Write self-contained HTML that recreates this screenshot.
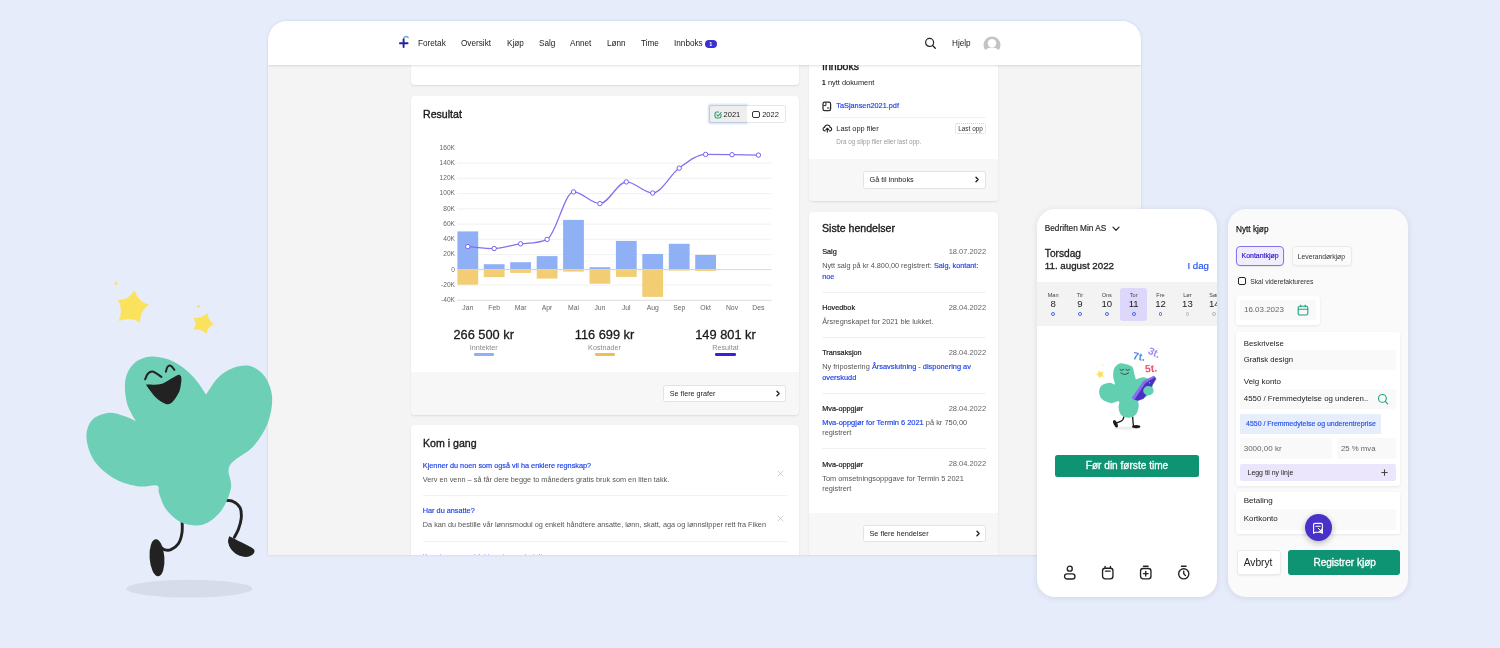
<!DOCTYPE html>
<html><head><meta charset="utf-8">
<style>
*{box-sizing:border-box;margin:0;padding:0}
html,body{width:1500px;height:648px;overflow:hidden}
body{background:#e6ecfa;font-family:"Liberation Sans",sans-serif;color:#1a1a1a;position:relative}
.abs{position:absolute}
.t{position:absolute;white-space:nowrap;line-height:1}
#win,.phone{will-change:transform}
/* main window */
#win{position:absolute;left:268px;top:20px;width:873px;height:535px;background:#f4f4f4;overflow:hidden;clip-path:inset(1px 0 0 0 round 19px 19px 0 0)}
#winsh{position:absolute;left:268px;top:21px;width:873px;height:534px;border-radius:19px 19px 0 0;box-shadow:0 0 3px rgba(120,140,190,.28)}
#nav{position:absolute;left:0;top:0;width:873px;height:45px;background:#fff;box-shadow:0 1px 2px rgba(0,0,0,.12);z-index:5}
.nv{position:absolute;top:20.3px;font-size:8.2px;color:#222;white-space:nowrap;line-height:1}
.pc{position:absolute;left:-268px;top:-20px;width:1500px;height:648px}
.card{position:absolute;background:#fff;border-radius:4px;box-shadow:0 1px 2px rgba(0,0,0,.10)}
.foot{position:absolute;left:0;right:0;bottom:0;background:#f7f7f7;border-radius:0 0 4px 4px}
.btn{position:absolute;background:#fff;border:1px solid #e3e3e3;border-radius:2.5px;font-size:7.2px;color:#222}
.h{position:absolute;font-size:10.6px;color:#1a1a1a;white-space:nowrap;line-height:1;-webkit-text-stroke:.35px #1a1a1a}
.blue{color:#1f4be0}
.gray{color:#555}
/* phones */
.phone{position:absolute;top:209px;height:387.8px;border-radius:18px;box-shadow:0 1px 6px rgba(60,70,100,.13);overflow:hidden}
.yl{position:absolute;margin-top:.8px;left:425px;width:30px;text-align:right;font-size:6.6px;color:#666;line-height:1;white-space:nowrap}
.ml{position:absolute;top:305.2px;width:30px;text-align:center;font-size:6.8px;color:#666;line-height:1;white-space:nowrap}
.tot{position:absolute;top:232.6px;width:62px;text-align:center;font-size:12.8px;color:#1a1a1a;line-height:1;white-space:nowrap;-webkit-text-stroke:.3px #1a1a1a}
.totl{position:absolute;top:247.9px;width:62px;text-align:center;font-size:7.2px;color:#8a8a8a;line-height:1;white-space:nowrap}
</style></head><body>

<div id="winsh"></div>
<div id="win">
  <div id="nav">
    <svg class="abs" style="left:130px;top:15px" width="12" height="14" viewBox="0 0 12 14"><path d="M5.5 5C5.5 2.6 7 1.4 8.6 1.6C9.2 1.7 9.7 2 10.1 2.5" fill="none" stroke="#6ea7e2" stroke-width="1.5" stroke-linecap="round"/><path d="M1.9 8.3H9.6M5.6 12.1V4.4" fill="none" stroke="#2a1f96" stroke-width="1.9" stroke-linecap="round"/></svg>
    <span class="nv" style="left:150px">Foretak</span>
    <span class="nv" style="left:193px">Oversikt</span>
    <span class="nv" style="left:239px">Kjøp</span>
    <span class="nv" style="left:271px">Salg</span>
    <span class="nv" style="left:302px">Annet</span>
    <span class="nv" style="left:339px">Lønn</span>
    <span class="nv" style="left:373px">Time</span>
    <span class="nv" style="left:406px">Innboks</span>
    <div class="abs" style="left:437px;top:19.5px;width:11.5px;height:8.5px;border-radius:5px;background:#3a2fd0;color:#fff;font-size:5.5px;font-weight:bold;text-align:center;line-height:8.5px">1</div>
    <svg class="abs" style="left:656px;top:17px" width="13" height="13" viewBox="0 0 13 13"><circle cx="5.6" cy="5.4" r="4" fill="none" stroke="#222" stroke-width="1.2"/><path d="M8.6 8.5L11.3 11.3" stroke="#222" stroke-width="1.3" stroke-linecap="round"/></svg>
    <span class="nv" style="left:684px">Hjelp</span>
    <svg class="abs" style="left:715px;top:16px;overflow:visible" width="18" height="18" viewBox="0 0 18 18"><defs><clipPath id="av"><circle cx="9" cy="9" r="8.5"/></clipPath></defs><circle cx="9" cy="9" r="8.5" fill="#c4c4c4"/><g clip-path="url(#av)" fill="#fff"><circle cx="9" cy="7.2" r="4.2"/></g><ellipse cx="9" cy="19.5" rx="9.6" ry="7.9" fill="#fff"/></svg>
  </div>

  <!-- left column -->
  <div class="card" style="left:143px;top:30px;width:388px;height:34.5px"></div>

  <div class="card" id="resultat" style="left:143px;top:76px;width:388px;height:319px">
    <span class="h" style="left:12px;top:12.5px">Resultat</span>
    <div class="foot" style="height:43px"></div>
    <!-- year toggle -->
    <div class="abs" style="left:297.6px;top:9.4px;width:39px;height:17.4px;background:#eee;border:1px solid #bfcbdc;border-radius:2px;box-shadow:0 0 0 1.5px rgba(170,195,235,.35)"></div>
    <div class="abs" style="left:336.4px;top:9.4px;width:38.4px;height:17.4px;background:#fff;border:1px solid #e6e6e6;border-left:none;border-radius:0 2px 2px 0"></div>
    <svg class="abs" style="left:302.5px;top:14.5px" width="8" height="8" viewBox="0 0 8 8"><path d="M7 3.6V5.2C7 6.2 6.2 7 5.2 7H2.8C1.8 7 1 6.2 1 5.2V2.8C1 1.8 1.8 1 2.8 1H4.6" fill="none" stroke="#2a9d6a" stroke-width="1.1" stroke-linecap="round"/><path d="M2.9 3.8L4.1 5L7.1 1.6" fill="none" stroke="#2a9d6a" stroke-width="1.1" stroke-linecap="round" stroke-linejoin="round"/></svg>
    <span class="t" style="left:312.6px;top:14.6px;font-size:7.5px;color:#222">2021</span>
    <div class="abs" style="left:341.4px;top:14.7px;width:7.2px;height:7.2px;border:1.25px solid #333;border-radius:2px"></div>
    <span class="t" style="left:351.2px;top:14.6px;font-size:7.5px;color:#222">2022</span>
    <!-- chart -->
    <svg class="abs" style="left:-411px;top:-96px" width="1500" height="648" viewBox="0 0 1500 648">
<line x1="457" x2="771.5" y1="163.1" y2="163.1" stroke="#ececec" stroke-width="0.8"/>
<line x1="457" x2="771.5" y1="178.3" y2="178.3" stroke="#ececec" stroke-width="0.8"/>
<line x1="457" x2="771.5" y1="193.6" y2="193.6" stroke="#ececec" stroke-width="0.8"/>
<line x1="457" x2="771.5" y1="208.8" y2="208.8" stroke="#ececec" stroke-width="0.8"/>
<line x1="457" x2="771.5" y1="224.1" y2="224.1" stroke="#ececec" stroke-width="0.8"/>
<line x1="457" x2="771.5" y1="239.3" y2="239.3" stroke="#ececec" stroke-width="0.8"/>
<line x1="457" x2="771.5" y1="254.6" y2="254.6" stroke="#ececec" stroke-width="0.8"/>
<line x1="457" x2="771.5" y1="269.8" y2="269.8" stroke="#ececec" stroke-width="0.8"/>
<line x1="457" x2="771.5" y1="285.1" y2="285.1" stroke="#ececec" stroke-width="0.8"/>
<line x1="457" x2="771.5" y1="300.3" y2="300.3" stroke="#ececec" stroke-width="0.8"/>
<line x1="457" x2="771.5" y1="300.3" y2="300.3" stroke="#dcdcdc" stroke-width="0.8"/>
<rect x="457.4" y="231.4" width="20.8" height="38.1" fill="#8fb0f5"/>
<rect x="457.4" y="269.5" width="20.8" height="15.2" fill="#f3cd73"/>
<rect x="483.8" y="264.2" width="20.8" height="5.3" fill="#8fb0f5"/>
<rect x="483.8" y="269.5" width="20.8" height="7.6" fill="#f3cd73"/>
<rect x="510.2" y="262.2" width="20.8" height="7.3" fill="#8fb0f5"/>
<rect x="510.2" y="269.5" width="20.8" height="3.4" fill="#f3cd73"/>
<rect x="536.7" y="256.1" width="20.8" height="13.4" fill="#8fb0f5"/>
<rect x="536.7" y="269.5" width="20.8" height="9.1" fill="#f3cd73"/>
<rect x="563.1" y="219.9" width="20.8" height="49.6" fill="#8fb0f5"/>
<rect x="563.1" y="269.5" width="20.8" height="2.1" fill="#f3cd73"/>
<rect x="589.5" y="267.2" width="20.8" height="2.3" fill="#8fb0f5"/>
<rect x="589.5" y="269.5" width="20.8" height="14.2" fill="#f3cd73"/>
<rect x="615.9" y="240.9" width="20.8" height="28.6" fill="#8fb0f5"/>
<rect x="615.9" y="269.5" width="20.8" height="7.4" fill="#f3cd73"/>
<rect x="642.3" y="254.0" width="20.8" height="15.5" fill="#8fb0f5"/>
<rect x="642.3" y="269.5" width="20.8" height="27.4" fill="#f3cd73"/>
<rect x="668.8" y="243.8" width="20.8" height="25.7" fill="#8fb0f5"/>
<rect x="668.8" y="269.5" width="20.8" height="1.1" fill="#f3cd73"/>
<rect x="695.2" y="254.9" width="20.8" height="14.6" fill="#8fb0f5"/>
<rect x="695.2" y="269.5" width="20.8" height="1.5" fill="#f3cd73"/>
<line x1="457" x2="720" y1="269.5" y2="269.5" stroke="#d4d4d4" stroke-width="1.2"/>
<line x1="720" x2="771.5" y1="269.5" y2="269.5" stroke="#f3dca6" stroke-width="1"/>
<path d="M467.8 246.6 C476.6 247.3 485.4 248.5 494.2 248.5 C503.0 248.5 511.8 244.6 520.6 243.8 C529.4 243.0 538.3 243.7 547.1 239.4 C555.9 235.0 564.7 191.9 573.5 191.9 C582.3 191.9 591.1 203.6 599.9 203.6 C608.7 203.6 617.5 181.9 626.3 181.9 C635.1 181.9 643.9 193.0 652.7 193.0 C661.5 193.0 670.4 174.5 679.2 168.1 C688.0 161.6 696.8 154.4 705.6 154.4 C714.4 154.4 723.2 154.5 732.0 154.7 C740.8 154.8 749.6 155.0 758.4 155.1" fill="none" stroke="#8570f0" stroke-width="1.25"/>
<circle cx="467.8" cy="246.6" r="2.2" fill="#fff" stroke="#7a62ee" stroke-width="1"/>
<circle cx="494.2" cy="248.5" r="2.2" fill="#fff" stroke="#7a62ee" stroke-width="1"/>
<circle cx="520.6" cy="243.8" r="2.2" fill="#fff" stroke="#7a62ee" stroke-width="1"/>
<circle cx="547.1" cy="239.4" r="2.2" fill="#fff" stroke="#7a62ee" stroke-width="1"/>
<circle cx="573.5" cy="191.9" r="2.2" fill="#fff" stroke="#7a62ee" stroke-width="1"/>
<circle cx="599.9" cy="203.6" r="2.2" fill="#fff" stroke="#7a62ee" stroke-width="1"/>
<circle cx="626.3" cy="181.9" r="2.2" fill="#fff" stroke="#7a62ee" stroke-width="1"/>
<circle cx="652.7" cy="193.0" r="2.2" fill="#fff" stroke="#7a62ee" stroke-width="1"/>
<circle cx="679.2" cy="168.1" r="2.2" fill="#fff" stroke="#7a62ee" stroke-width="1"/>
<circle cx="705.6" cy="154.4" r="2.2" fill="#fff" stroke="#7a62ee" stroke-width="1"/>
<circle cx="732.0" cy="154.7" r="2.2" fill="#fff" stroke="#7a62ee" stroke-width="1"/>
<circle cx="758.4" cy="155.1" r="2.2" fill="#fff" stroke="#7a62ee" stroke-width="1"/>
    </svg>
    <div class="abs" style="left:-411px;top:-96px;width:0;height:0">
<span class="yl" style="top:143.9px">160K</span>
<span class="yl" style="top:159.2px">140K</span>
<span class="yl" style="top:174.4px">120K</span>
<span class="yl" style="top:189.7px">100K</span>
<span class="yl" style="top:204.9px">80K</span>
<span class="yl" style="top:220.2px">60K</span>
<span class="yl" style="top:235.4px">40K</span>
<span class="yl" style="top:250.7px">20K</span>
<span class="yl" style="top:265.9px">0</span>
<span class="yl" style="top:281.1px">-20K</span>
<span class="yl" style="top:296.4px">-40K</span>
<span class="ml" style="left:452.8px">Jan</span>
<span class="ml" style="left:479.2px">Feb</span>
<span class="ml" style="left:505.6px">Mar</span>
<span class="ml" style="left:532.1px">Apr</span>
<span class="ml" style="left:558.5px">Mai</span>
<span class="ml" style="left:584.9px">Jun</span>
<span class="ml" style="left:611.3px">Jul</span>
<span class="ml" style="left:637.7px">Aug</span>
<span class="ml" style="left:664.2px">Sep</span>
<span class="ml" style="left:690.6px">Okt</span>
<span class="ml" style="left:717.0px">Nov</span>
<span class="ml" style="left:743.4px">Des</span>
    </div>
    <!-- totals -->
    <span class="tot" style="left:41.7px">266 500 kr</span>
    <span class="tot" style="left:162.5px">116 699 kr</span>
    <span class="tot" style="left:283.5px">149 801 kr</span>
    <span class="totl" style="left:41.7px">Inntekter</span>
    <span class="totl" style="left:162.5px">Kostnader</span>
    <span class="totl" style="left:283.5px">Resultat</span>
    <div class="abs" style="left:62.5px;top:257.4px;width:20.5px;height:2.4px;border-radius:1.2px;background:#8fb0f5"></div>
    <div class="abs" style="left:183.5px;top:257.4px;width:20.5px;height:2.4px;border-radius:1.2px;background:#f0c04f"></div>
    <div class="abs" style="left:304.4px;top:257.4px;width:20.5px;height:2.4px;border-radius:1.2px;background:#3a1fe0"></div>
    <div class="btn" style="left:251.8px;top:288.9px;width:123.7px;height:17.3px"><span class="t" style="left:6px;top:4.6px">Se flere grafer</span><svg class="abs" style="right:4.2px;top:4.6px" width="6" height="7" viewBox="0 0 6 7"><path d="M2 1.3L4.1 3.5L2 5.7" fill="none" stroke="#222" stroke-width="1.4" stroke-linecap="round" stroke-linejoin="round"/></svg></div>
  </div>

  <div class="card" id="kom" style="left:143px;top:405px;width:388px;height:160px">
    <span class="h" style="left:12px;top:12.5px">Kom i gang</span>
  </div>

  <!-- right column -->
  <div class="card" id="innboks" style="left:541px;top:30px;width:189px;height:151px">
    <span class="h" style="left:13px;top:10.7px">Innboks</span>
    <div class="foot" style="height:42.3px"></div>
  </div>
  <div class="card" id="siste" style="left:541px;top:191.7px;width:189px;height:343.3px;border-radius:4px 4px 0 0">
    <span class="h" style="left:13px;top:11.8px">Siste hendelser</span>
    <div class="foot" style="height:42px;border-radius:0"></div>
  </div>
  <div class="pc">
<!--CARDS-START-->
<!-- kom i gang -->
<span class="t" style="left:422.8px;top:461.9px;font-size:7.3px;color:#1c41ec;-webkit-text-stroke:.15px #1c41ec">Kjenner du noen som også vil ha enklere regnskap?</span>
<span class="t" style="left:422.8px;top:475.8px;font-size:7.33px;color:#555;">Verv en venn – så får dere begge to måneders gratis bruk som en liten takk.</span>
<div class="abs" style="left:423px;top:495.3px;width:364px;height:1px;background:#f1f1f1"></div>
<span class="t" style="left:422.8px;top:507.2px;font-size:7.3px;color:#1c41ec;-webkit-text-stroke:.15px #1c41ec">Har du ansatte?</span>
<span class="t" style="left:422.8px;top:521.1px;font-size:7.3px;color:#555;">Da kan du bestille vår lønnsmodul og enkelt håndtere ansatte, lønn, skatt, aga og lønnslipper rett fra Fiken</span>
<div class="abs" style="left:423px;top:540.6px;width:364px;height:1px;background:#f1f1f1"></div>
<span class="t" style="left:422.8px;top:553.0px;font-size:7.3px;color:#7f96ee;">Kom i gang med fakturering og betaling</span>
<svg class="abs" style="left:777.2px;top:469.5px" width="7" height="7" viewBox="0 0 7 7"><path d="M1 1L6 6M6 1L1 6" stroke="#c4c4c4" stroke-width=".8" stroke-linecap="round"/></svg>
<svg class="abs" style="left:777.2px;top:514.8px" width="7" height="7" viewBox="0 0 7 7"><path d="M1 1L6 6M6 1L1 6" stroke="#c4c4c4" stroke-width=".8" stroke-linecap="round"/></svg>
<!-- innboks -->
<span class="t" style="left:821.8px;top:79.1px;font-size:7.4px;color:#222;"><b>1</b> nytt dokument</span>
<svg class="abs" style="left:822px;top:100.8px" width="10" height="11" viewBox="0 0 10 11"><rect x="1" y="1.2" width="7.6" height="8.4" rx="1.7" fill="none" stroke="#2a2a2a" stroke-width="1.25"/><path d="M1.4 4.6H3.9V1.6" fill="none" stroke="#2a2a2a" stroke-width="1" stroke-linejoin="round"/><path d="M5.4 7H7" stroke="#2a2a2a" stroke-width="1" stroke-linecap="round"/></svg>
<span class="t" style="left:836.3px;top:101.5px;font-size:7.32px;color:#1c41ec;-webkit-text-stroke:.15px #1c41ec">TaSjansen2021.pdf</span>
<div class="abs" style="left:822px;top:116.6px;width:164px;height:1px;background:#f1f1f1"></div>
<svg class="abs" style="left:821.6px;top:123.6px" width="11" height="9" viewBox="0 0 11 9" ><g transform="translate(.3 .2) scale(.92)"><path d="M3.2 7.2H2.8C1.6 7.2 .8 6.3 .8 5.3C.8 4.3 1.5 3.6 2.5 3.5C2.7 2 3.9 .9 5.5 .9C7.1 .9 8.3 2 8.5 3.4C9.5 3.5 10.2 4.3 10.2 5.3C10.2 6.3 9.4 7.2 8.3 7.2H7.8" fill="none" stroke="#222" stroke-width="1.2" stroke-linecap="round"/><path d="M5.5 8.6V4.8M4 6L5.5 4.4L7 6" fill="none" stroke="#222" stroke-width="1.2" stroke-linecap="round" stroke-linejoin="round"/></g></svg>
<span class="t" style="left:836.3px;top:124.8px;font-size:7.42px;color:#222;">Last opp filer</span>
<div class="abs" style="left:955.3px;top:123.3px;width:30.5px;height:11.2px;border:1px dotted #cfcfcf;border-radius:2px;background:#fff"></div>
<span class="t" style="left:958.2px;top:125.6px;font-size:6.44px;color:#333;">Last opp</span>
<span class="t" style="left:836.3px;top:139.3px;font-size:6.32px;color:#9a9a9a;">Dra og slipp filer eller last opp.</span>
<div class="btn" style="left:862.5px;top:171.4px;width:123.3px;height:17.2px"><span class="t" style="left:6px;top:3.7px;font-size:7.3px;color:#222">Gå til innboks</span><svg class="abs" style="right:4.6px;top:4.1px" width="6" height="7" viewBox="0 0 6 7"><path d="M2 1.3L4.1 3.5L2 5.7" fill="none" stroke="#222" stroke-width="1.4" stroke-linecap="round" stroke-linejoin="round"/></svg></div>
<!-- siste -->
<span class="t" style="left:822.2px;top:248.3px;font-size:7.3px;color:#222;-webkit-text-stroke:.2px #222">Salg</span>
<span class="t" style="right:513.9px;top:248.2px;font-size:7.49px;color:#666;">18.07.2022</span>
<span class="t" style="left:822.2px;top:304.1px;font-size:7.3px;color:#222;-webkit-text-stroke:.2px #222">Hovedbok</span>
<span class="t" style="right:513.9px;top:304.0px;font-size:7.49px;color:#666;">28.04.2022</span>
<span class="t" style="left:822.2px;top:349.1px;font-size:7.3px;color:#222;-webkit-text-stroke:.2px #222">Transaksjon</span>
<span class="t" style="right:513.9px;top:349.0px;font-size:7.49px;color:#666;">28.04.2022</span>
<span class="t" style="left:822.2px;top:405.3px;font-size:7.3px;color:#222;-webkit-text-stroke:.2px #222">Mva-oppgjør</span>
<span class="t" style="right:513.9px;top:405.2px;font-size:7.49px;color:#666;">28.04.2022</span>
<span class="t" style="left:822.2px;top:460.5px;font-size:7.3px;color:#222;-webkit-text-stroke:.2px #222">Mva-oppgjør</span>
<span class="t" style="right:513.9px;top:460.4px;font-size:7.49px;color:#666;">28.04.2022</span>
<span class="t" style="left:822.2px;top:262.2px;font-size:7.29px;color:#555;">Nytt salg på kr 4.800,00 registrert: <span style="color:#1c41ec;-webkit-text-stroke:.15px #1c41ec">Salg, kontant:</span></span>
<span class="t" style="left:822.2px;top:272.8px;font-size:7.29px;color:#555;"><span style="color:#1c41ec;-webkit-text-stroke:.15px #1c41ec">noe</span></span>
<span class="t" style="left:822.2px;top:317.8px;font-size:7.34px;color:#555;">Årsregnskapet for 2021 ble lukket.</span>
<span class="t" style="left:822.2px;top:363.1px;font-size:7.4px;color:#555;">Ny fripostering <span style="color:#1c41ec;-webkit-text-stroke:.15px #1c41ec">Årsavslutning - disponering av</span></span>
<span class="t" style="left:822.2px;top:373.6px;font-size:7.4px;color:#555;"><span style="color:#1c41ec;-webkit-text-stroke:.15px #1c41ec">overskudd</span></span>
<span class="t" style="left:822.2px;top:419.1px;font-size:7.45px;color:#555;"><span style="color:#1c41ec;-webkit-text-stroke:.15px #1c41ec">Mva-oppgjør for Termin 6 2021</span> på kr 750,00</span>
<span class="t" style="left:822.2px;top:429.4px;font-size:7.4px;color:#555;">registrert</span>
<span class="t" style="left:822.2px;top:474.7px;font-size:7.4px;color:#555;">Tom omsetningsoppgave for Termin 5 2021</span>
<span class="t" style="left:822.2px;top:485.0px;font-size:7.4px;color:#555;">registrert</span>
<div class="abs" style="left:822px;top:292.0px;width:164px;height:1px;background:#f1f1f1"></div>
<div class="abs" style="left:822px;top:337.3px;width:164px;height:1px;background:#f1f1f1"></div>
<div class="abs" style="left:822px;top:392.8px;width:164px;height:1px;background:#f1f1f1"></div>
<div class="abs" style="left:822px;top:448.4px;width:164px;height:1px;background:#f1f1f1"></div>
<div class="btn" style="left:862.5px;top:525.3px;width:123.6px;height:17.2px"><span class="t" style="left:6px;top:3.7px;font-size:7.29px;color:#222">Se flere hendelser</span><svg class="abs" style="right:4.6px;top:4.1px" width="6" height="7" viewBox="0 0 6 7"><path d="M2 1.3L4.1 3.5L2 5.7" fill="none" stroke="#222" stroke-width="1.4" stroke-linecap="round" stroke-linejoin="round"/></svg></div>
<!--CARDS-END-->
  </div>
</div>

<div class="phone" id="p1" style="left:1037px;width:180px;background:#fff"><div class="abs" style="left:-1037px;top:-209px;width:1500px;height:648px">
<!--P1-START-->
<!-- phone1 -->
<span class="t" style="left:1044.8px;top:225.1px;font-size:8.24px;color:#222;-webkit-text-stroke:.15px #222">Bedriften Min AS</span>
<svg class="abs" style="left:1112px;top:226.2px" width="8" height="6" viewBox="0 0 8 6"><path d="M1 1.2L4 4.3L7 1.2" fill="none" stroke="#222" stroke-width="1.2" stroke-linecap="round" stroke-linejoin="round"/></svg>
<span class="t" style="left:1044.8px;top:249.3px;font-size:10.18px;color:#222;-webkit-text-stroke:.3px #222">Torsdag</span>
<span class="t" style="left:1044.8px;top:260.5px;font-size:9.75px;color:#222;-webkit-text-stroke:.3px #222">11. august 2022</span>
<span class="t" style="left:1187.4px;top:260.6px;font-size:9.71px;color:#2450ee;-webkit-text-stroke:.15px #2450ee">I dag</span>
<div class="abs" style="left:1037.0px;top:281.8px;width:180.0px;height:44.7px;background:#f3f3f3;"></div>
<div class="abs" style="left:1120.1px;top:288.0px;width:27.2px;height:33.0px;background:#dcd7fb;border-radius:3px"></div>
<span class="t" style="left:1003.1px;width:100px;text-align:center;top:293.1px;font-size:5.6px;color:#444;">Man</span>
<span class="t" style="left:1003.1px;width:100px;text-align:center;top:299.1px;font-size:9.6px;color:#222;">8</span>
<div class="abs" style="left:1051.2px;top:312px;width:3.8px;height:3.8px;border-radius:50%;border:.9px solid #3a63ea"></div>
<span class="t" style="left:1030.0px;width:100px;text-align:center;top:293.1px;font-size:5.6px;color:#444;">Tir</span>
<span class="t" style="left:1030.0px;width:100px;text-align:center;top:299.1px;font-size:9.6px;color:#222;">9</span>
<div class="abs" style="left:1078.1px;top:312px;width:3.8px;height:3.8px;border-radius:50%;border:.9px solid #3a63ea"></div>
<span class="t" style="left:1056.8px;width:100px;text-align:center;top:293.1px;font-size:5.6px;color:#444;">Ons</span>
<span class="t" style="left:1056.8px;width:100px;text-align:center;top:299.1px;font-size:9.6px;color:#222;">10</span>
<div class="abs" style="left:1104.9px;top:312px;width:3.8px;height:3.8px;border-radius:50%;border:.9px solid #3a63ea"></div>
<span class="t" style="left:1083.7px;width:100px;text-align:center;top:293.1px;font-size:5.6px;color:#444;">Tor</span>
<span class="t" style="left:1083.7px;width:100px;text-align:center;top:299.1px;font-size:9.6px;color:#222;">11</span>
<div class="abs" style="left:1131.8px;top:312px;width:3.8px;height:3.8px;border-radius:50%;border:.9px solid #3a63ea"></div>
<span class="t" style="left:1110.5px;width:100px;text-align:center;top:293.1px;font-size:5.6px;color:#444;">Fre</span>
<span class="t" style="left:1110.5px;width:100px;text-align:center;top:299.1px;font-size:9.6px;color:#222;">12</span>
<div class="abs" style="left:1158.6px;top:312px;width:3.8px;height:3.8px;border-radius:50%;border:.9px solid #3a63ea"></div>
<span class="t" style="left:1137.4px;width:100px;text-align:center;top:293.1px;font-size:5.6px;color:#444;">Lør</span>
<span class="t" style="left:1137.4px;width:100px;text-align:center;top:299.1px;font-size:9.6px;color:#222;">13</span>
<div class="abs" style="left:1185.5px;top:312px;width:3.8px;height:3.8px;border-radius:50%;border:.9px solid #b5b5b5"></div>
<span class="t" style="left:1164.3px;width:100px;text-align:center;top:293.1px;font-size:5.6px;color:#444;">Søn</span>
<span class="t" style="left:1164.3px;width:100px;text-align:center;top:299.1px;font-size:9.6px;color:#222;">14</span>
<div class="abs" style="left:1212.4px;top:312px;width:3.8px;height:3.8px;border-radius:50%;border:.9px solid #b5b5b5"></div>
<div class="abs" style="left:1055.0px;top:455.1px;width:143.9px;height:21.7px;background:#0e9373;border-radius:2.5px"></div>
<span class="t" style="left:1077.0px;width:100px;text-align:center;top:460.5px;font-size:10.1px;color:#fff;-webkit-text-stroke:.3px #fff">Før din første time</span>
<svg class="abs" style="left:1062.5px;top:564.5px" width="13.5" height="15.4" viewBox="0 0 14 16"><circle cx="7" cy="3.8" r="2.6" fill="none" stroke="#222" stroke-width="1.4" stroke-linecap="round" stroke-linejoin="round"/><rect x="1.6" y="9.2" width="10.8" height="5.4" rx="2.7" fill="none" stroke="#222" stroke-width="1.4" stroke-linecap="round" stroke-linejoin="round"/></svg>
<svg class="abs" style="left:1100.6px;top:564.5px" width="13.5" height="15.4" viewBox="0 0 14 16"><rect x="1.6" y="3.4" width="10.8" height="11" rx="2.6" fill="none" stroke="#222" stroke-width="1.4" stroke-linecap="round" stroke-linejoin="round"/><path d="M4.2 1.4V3.2M9.8 1.4V3.2M4.6 6.4H9.4" fill="none" stroke="#222" stroke-width="1.4" stroke-linecap="round" stroke-linejoin="round"/></svg>
<svg class="abs" style="left:1139px;top:564.5px" width="13.5" height="15.4" viewBox="0 0 14 16"><rect x="1.6" y="3.6" width="10.8" height="10.8" rx="2.6" fill="none" stroke="#222" stroke-width="1.4" stroke-linecap="round" stroke-linejoin="round"/><path d="M4.6 1.3H9.4M7 6.6V11.4M4.6 9H9.4" fill="none" stroke="#222" stroke-width="1.4" stroke-linecap="round" stroke-linejoin="round"/></svg>
<svg class="abs" style="left:1177.2px;top:564.5px" width="13.5" height="15.4" viewBox="0 0 14 16"><circle cx="7" cy="9.2" r="5.3" fill="none" stroke="#222" stroke-width="1.4" stroke-linecap="round" stroke-linejoin="round"/><path d="M4.6 1.3H9.4M7 6.4V9.2L8.8 11" fill="none" stroke="#222" stroke-width="1.4" stroke-linecap="round" stroke-linejoin="round"/></svg>

<!--SM-START-->
<svg class="abs" style="left:0;top:0" width="1500" height="648" viewBox="0 0 1500 648">
<ellipse cx="1127.0" cy="428.2" rx="13" ry="1.6" fill="#ececec"/>
<path d="M1124.1 416.0 C1123.8 416.7 1123.4 419.1 1122.5 420.1 C1121.5 421.1 1119.7 421.7 1118.6 422.2 C1117.5 422.7 1116.4 423.1 1116.0 423.3" fill="none" stroke="#1a1a1a" stroke-width="1.3" stroke-linecap="round"/>
<path d="M1132.7 416.8 C1132.7 417.7 1132.9 420.2 1133.0 421.7 C1133.1 423.2 1133.4 425.1 1133.5 425.8" fill="none" stroke="#1a1a1a" stroke-width="1.3" stroke-linecap="round"/>
<ellipse cx="1115.5" cy="423.8" rx="1.8" ry="4" fill="#1a1a1a" transform="rotate(-25 1115.5 423.8)"/>
<ellipse cx="1136.2" cy="426.6" rx="4.2" ry="1.7" fill="#1a1a1a"/>
<path d="M1135.9 379.6 C1137.4 379.2 1142.1 376.8 1144.8 377.5 C1147.5 378.1 1151.0 381.2 1152.1 383.6 C1153.2 386.0 1152.5 389.4 1151.3 391.7 C1150.1 394.0 1147.0 396.2 1144.8 397.4 C1142.7 398.6 1139.4 397.5 1138.3 399.0 C1137.3 400.5 1139.1 403.7 1138.7 406.3 C1138.3 408.9 1137.6 412.5 1135.9 414.4 C1134.2 416.3 1131.1 417.5 1128.6 417.7 C1126.2 417.8 1123.0 416.8 1121.3 415.2 C1119.7 413.6 1119.0 410.2 1118.6 407.9 C1118.2 405.6 1120.2 402.3 1118.9 401.5 C1117.6 400.6 1113.6 403.5 1110.8 403.1 C1108.0 402.7 1103.8 400.9 1101.9 399.0 C1099.9 397.1 1099.1 394.0 1099.1 391.7 C1099.1 389.4 1100.1 386.7 1101.9 385.2 C1103.7 383.8 1107.8 382.9 1110.0 382.8 C1112.1 382.7 1114.3 385.4 1114.8 384.4 C1115.4 383.5 1113.4 379.7 1113.2 377.1 C1113.1 374.6 1113.2 371.2 1114.0 369.0 C1114.8 366.9 1116.6 365.1 1118.1 364.2 C1119.6 363.2 1120.7 363.0 1122.9 363.4 C1125.2 363.8 1129.9 364.6 1131.9 366.6 C1133.8 368.6 1134.1 373.4 1134.8 375.5 C1135.5 377.7 1135.7 378.9 1135.9 379.6Z" fill="#63cfb1"/>
<path d="M1120.0 369.4 C1120.3 369.5 1121.2 370.3 1121.8 370.3 C1122.4 370.3 1123.3 369.5 1123.6 369.4" fill="none" stroke="#1a1a1a" stroke-width=".7" stroke-linecap="round"/>
<path d="M1125.9 369.4 C1126.2 369.5 1127.1 370.3 1127.6 370.3 C1128.2 370.3 1129.1 369.5 1129.4 369.4" fill="none" stroke="#1a1a1a" stroke-width=".7" stroke-linecap="round"/>
<path d="M1120.8 372.9 C1121.5 373.2 1123.4 374.4 1124.7 374.4 C1126.0 374.4 1128.0 373.2 1128.6 372.9" fill="none" stroke="#1a1a1a" stroke-width=".7" stroke-linecap="round"/>
<path d="M1134.1 399.4 L1145.1 382.7 L1154.9 376.9 L1155.9 379.0 L1151.6 386.2 L1143.6 398.4 L1138.3 400.4Z" fill="#4a2fc4" stroke="#4a2fc4" stroke-width=".6" stroke-linejoin="round"/>
<ellipse cx="1148.4" cy="390.7" rx="5.2" ry="4.6" fill="#63cfb1"/>
<path d="M1131.8 398.0 L1143.6 381.0 L1153.6 376.1 L1154.9 376.9 L1145.1 383.0 L1134.3 399.6Z" fill="#8a6cf2" stroke="#8a6cf2" stroke-width=".5" stroke-linejoin="round"/>
<circle cx="1149.7" cy="382.8" r=".55" fill="#e8e2ff"/>
<path d="M1098.9 370.7 L1100.8 372.5 L1103.3 372.0 L1102.2 374.3 L1103.5 376.6 L1100.9 376.2 L1099.2 378.1 L1098.7 375.6 L1096.4 374.5 L1098.6 373.3 Z" fill="#fbe25c" stroke="#fbe25c" stroke-width=".5" stroke-linejoin="round"/>
<circle cx="1102.7" cy="365.1" r=".9" fill="#fdf0a8"/>
<circle cx="1095.9" cy="367.1" r=".6" fill="#fdf3c0"/>
</svg>
<span class="t" style="left:1129.3px;top:351.9px;width:20px;text-align:center;font-size:10.4px;font-weight:bold;color:#4f86f0;transform:rotate(10deg)">7t.</span>
<span class="t" style="left:1143.9px;top:347.5px;width:20px;text-align:center;font-size:10.4px;font-weight:bold;color:#a08af0;transform:rotate(25deg)">3t.</span>
<span class="t" style="left:1141.2px;top:363.8px;width:20px;text-align:center;font-size:10.4px;font-weight:bold;color:#f0506e;transform:rotate(-5deg)">5t.</span>
<!--SM-END-->
<!--P1-END-->
</div></div>
<div class="phone" id="p2" style="left:1228px;width:180px;background:#fafafa"><div class="abs" style="left:-1228px;top:-209px;width:1500px;height:648px">
<!--P2-START-->

<span class="t" style="left:1236.0px;top:225.7px;font-size:8.24px;color:#222;-webkit-text-stroke:.25px #222">Nytt kjøp</span>
<div class="abs" style="left:1236.0px;top:246.3px;width:47.9px;height:20.1px;background:#f0edfe;border:1px solid #8a72ea;border-radius:4px;box-shadow:0 1px 2px rgba(0,0,0,.08)"></div>
<span class="t" style="left:1241.6px;top:253.4px;font-size:6.93px;color:#3a22c8;-webkit-text-stroke:.2px #3a22c8">Kontantkjøp</span>
<div class="abs" style="left:1291.6px;top:246.3px;width:60.2px;height:20.1px;background:#fbfbfb;border:1px solid #ebebeb;border-radius:4px;box-shadow:0 1px 2px rgba(0,0,0,.05)"></div>
<span class="t" style="left:1297.8px;top:253.5px;font-size:6.74px;color:#333;">Leverandørkjøp</span>
<div class="abs" style="left:1237.6px;top:277.2px;width:8.2px;height:8.2px;border:1.1px solid #222;border-radius:2px;background:#fff"></div>
<span class="t" style="left:1250.2px;top:278.5px;font-size:6.74px;color:#333;">Skal viderefaktureres</span>
<div class="abs" style="left:1236.0px;top:295.7px;width:84.3px;height:29.3px;background:#fff;border-radius:3px;box-shadow:0 1px 3px rgba(0,0,0,.08)"></div>
<div class="abs" style="left:1240.0px;top:300.3px;width:76.3px;height:20.1px;background:#f9f9f9;border-radius:2px"></div>
<span class="t" style="left:1244.0px;top:305.6px;font-size:7.97px;color:#666;">16.03.2023</span>
<svg class="abs" style="left:1297.3px;top:304.4px" width="12" height="12" viewBox="0 0 12 12"><rect x="1.2" y="2.2" width="9.6" height="8.8" rx="1.6" fill="none" stroke="#1aa37e" stroke-width="1.1"/><path d="M1.4 5.2H10.6M3.8 1V2.8M8.2 1V2.8" fill="none" stroke="#1aa37e" stroke-width="1.1" stroke-linecap="round"/></svg>
<div class="abs" style="left:1235.6px;top:332.1px;width:164.9px;height:153.7px;background:#fff;border-radius:3px;box-shadow:0 1px 3px rgba(0,0,0,.08)"></div>
<span class="t" style="left:1243.8px;top:339.5px;font-size:7.84px;color:#222;">Beskrivelse</span>
<div class="abs" style="left:1240.0px;top:350.3px;width:156.0px;height:19.5px;background:#f9f9f9;border-radius:2px"></div>
<span class="t" style="left:1243.8px;top:356.2px;font-size:7.7px;color:#222;">Grafisk design</span>
<span class="t" style="left:1243.8px;top:377.9px;font-size:7.97px;color:#222;">Velg konto</span>
<div class="abs" style="left:1240.0px;top:388.6px;width:156.0px;height:20.4px;background:#f9f9f9;border-radius:2px"></div>
<span class="t" style="left:1243.8px;top:394.6px;font-size:7.86px;color:#222;">4550 / Fremmedytelse og underen..</span>
<svg class="abs" style="left:1377.4px;top:392.8px" width="12" height="12" viewBox="0 0 12 12"><circle cx="5.4" cy="5.4" r="3.9" fill="none" stroke="#1aa37e" stroke-width="1.1"/><path d="M8.3 8.4L10.6 10.8" stroke="#1aa37e" stroke-width="1.2" stroke-linecap="round"/></svg>
<div class="abs" style="left:1240.0px;top:413.5px;width:141.4px;height:20.9px;background:#e6eefc;border-radius:1px"></div>
<span class="t" style="left:1246.0px;top:420.2px;font-size:6.98px;color:#2450ee;-webkit-text-stroke:.15px #2450ee">4550 / Fremmedytelse og underentreprise</span>
<div class="abs" style="left:1240.0px;top:438.2px;width:92.3px;height:21.1px;background:#f9f9f9;border-radius:2px"></div>
<span class="t" style="left:1243.7px;top:444.5px;font-size:8.02px;color:#666;">3000,00 kr</span>
<div class="abs" style="left:1337.0px;top:438.2px;width:59.0px;height:21.1px;background:#f9f9f9;border-radius:2px"></div>
<span class="t" style="left:1341.0px;top:444.7px;font-size:7.78px;color:#666;">25 % mva</span>
<div class="abs" style="left:1240.0px;top:463.7px;width:156.0px;height:17.8px;background:#ebe6fc;border-radius:2px"></div>
<span class="t" style="left:1247.6px;top:469.6px;font-size:6.91px;color:#222;">Legg til ny linje</span>
<svg class="abs" style="left:1380.5px;top:469.2px" width="7" height="7" viewBox="0 0 7 7"><path d="M3.5 .8V6.2M.8 3.5H6.2" stroke="#444" stroke-width="1.1" stroke-linecap="round"/></svg>
<div class="abs" style="left:1235.6px;top:491.7px;width:164.9px;height:42.1px;background:#fff;border-radius:3px;box-shadow:0 1px 3px rgba(0,0,0,.08)"></div>
<span class="t" style="left:1243.7px;top:496.5px;font-size:8.05px;color:#222;">Betaling</span>
<div class="abs" style="left:1240.0px;top:508.6px;width:156.0px;height:21.1px;background:#f9f9f9;border-radius:2px"></div>
<span class="t" style="left:1243.7px;top:514.6px;font-size:7.94px;color:#222;">Kortkonto</span>
<div class="abs" style="left:1304.8px;top:514.3px;width:26.8px;height:26.8px;border-radius:50%;background:#4631c9;box-shadow:0 2px 6px rgba(0,0,0,.28)"></div>
<svg class="abs" style="left:1312.3px;top:521.6px" width="12" height="13" viewBox="0 0 12 13"><path d="M1.6 11.2V2.6C1.6 1.9 2.1 1.4 2.8 1.4H9.2C9.9 1.4 10.4 1.9 10.4 2.6V11.2L8.4 10.2H3.6Z" fill="none" stroke="#fff" stroke-width="1.1" stroke-linejoin="round"/><path d="M3.8 4.2H8.2" stroke="#fff" stroke-width="1.1" stroke-linecap="round"/><path d="M6.2 6.2L9.4 9.4M9.4 7.2V9.4H7.2" fill="none" stroke="#fff" stroke-width="1" stroke-linecap="round" stroke-linejoin="round"/></svg>
<div class="abs" style="left:1236.9px;top:549.8px;width:43.7px;height:25.6px;background:#fff;border:1px solid #ebebeb;border-radius:3px;box-shadow:0 1px 2px rgba(0,0,0,.06)"></div>
<span class="t" style="left:1243.7px;top:557.8px;font-size:10.23px;color:#222;">Avbryt</span>
<div class="abs" style="left:1288.0px;top:549.8px;width:112.2px;height:25.6px;background:#0e9373;border-radius:3px"></div>
<span class="t" style="left:1313.4px;top:557.9px;font-size:10.06px;color:#fff;-webkit-text-stroke:.3px #fff">Registrer kjøp</span>
<!--P2-END-->
</div></div>

<div id="mascot" class="abs" style="left:0;top:0;width:0;height:0">
<!--M-START-->
<svg class="abs" style="left:0;top:0" width="1500" height="648" viewBox="0 0 1500 648">
<ellipse cx="189.4" cy="588.7" rx="63" ry="8.9" fill="#d6dce9"/>
<path d="M182.0 517.8 C182.0 520.2 182.7 528.3 182.0 532.6 C181.4 536.9 180.2 540.9 178.3 543.7 C176.5 546.5 173.2 548.6 170.9 549.6 C168.6 550.6 166.4 550.3 164.4 549.6 C162.5 549.0 160.1 546.2 159.3 545.6" fill="none" stroke="#222" stroke-width="2.9" stroke-linecap="round"/>
<path d="M223.7 500.2 C225.2 500.4 230.2 500.2 233.0 501.5 C235.7 502.7 238.6 504.9 240.0 507.6 C241.4 510.3 241.5 514.2 241.3 517.8 C241.0 521.3 239.7 525.6 238.5 528.9 C237.4 532.1 235.1 535.8 234.4 537.2" fill="none" stroke="#222" stroke-width="2.9" stroke-linecap="round"/>
<ellipse cx="157.0" cy="557.8" rx="7.4" ry="18.6" fill="#222" transform="rotate(-4 157.0 557.8)"/>
<path d="M229.3 536.3 C230.8 537.1 235.1 539.2 238.5 540.9 C241.9 542.6 247.0 544.9 249.6 546.5 C252.3 548.0 254.0 548.8 254.4 550.2 C254.9 551.6 253.8 553.7 252.4 554.8 C251.0 556.0 248.4 557.0 245.9 557.0 C243.5 557.0 240.1 556.1 237.6 554.8 C235.1 553.5 232.7 551.4 231.1 549.3 C229.5 547.1 228.5 544.0 228.1 541.9 C227.8 539.7 229.1 537.2 229.3 536.3Z" fill="#222"/>
<path d="M206.1 394.6 C208.1 391.8 213.4 382.3 217.8 377.9 C222.2 373.5 227.1 370.1 232.5 368.2 C237.9 366.2 244.7 364.8 250.1 366.1 C255.5 367.5 261.1 371.3 264.8 376.4 C268.4 381.5 271.6 389.1 272.1 396.9 C272.6 404.7 270.9 415.0 267.7 423.3 C264.5 431.6 259.4 439.7 253.0 446.8 C246.7 453.9 233.2 459.0 229.6 465.8 C225.9 472.7 232.5 480.3 231.0 487.8 C229.6 495.4 225.4 505.2 220.8 511.3 C216.1 517.4 209.5 522.5 203.2 524.5 C196.8 526.4 188.7 525.5 182.6 523.0 C176.5 520.6 170.4 514.7 166.5 509.8 C162.6 504.9 160.8 497.8 159.2 493.7 C157.6 489.6 160.3 486.7 156.8 485.5 C153.4 484.3 145.6 487.4 138.7 486.4 C131.7 485.3 122.5 483.2 115.2 479.0 C107.9 474.9 99.5 468.3 94.7 461.4 C89.9 454.6 86.9 444.8 86.5 438.0 C86.0 431.1 88.2 424.5 91.7 420.4 C95.3 416.2 102.5 413.8 107.9 413.0 C113.2 412.3 119.3 414.6 124.0 416.0 C128.6 417.4 133.8 420.4 135.7 421.3 C134.3 418.2 128.6 409.8 126.9 402.8 C125.2 395.8 124.2 385.9 125.5 379.3 C126.7 372.7 129.9 367.0 134.3 363.2 C138.7 359.4 145.2 356.7 151.8 356.5 C158.4 356.2 167.0 358.4 173.8 361.7 C180.7 365.1 187.5 370.9 192.9 376.4 C198.3 381.9 203.9 391.5 206.1 394.6Z" fill="#6dcfb5"/>
<path d="M145.1 379.3 C145.6 378.3 146.7 374.7 148.0 373.5 C149.4 372.2 151.1 371.1 153.3 371.7 C155.6 372.3 160.2 376.1 161.5 377.0" fill="none" stroke="#222" stroke-width="2" stroke-linecap="round"/>
<path d="M165.9 371.7 C166.2 370.9 166.6 368.0 167.4 367.0 C168.2 366.0 169.7 365.3 170.9 365.8 C172.1 366.3 173.8 369.3 174.4 369.9" fill="none" stroke="#222" stroke-width="2" stroke-linecap="round"/>
<path d="M146.0 384.6 C148.7 384.5 156.5 385.3 162.1 383.7 C167.7 382.1 176.7 374.2 179.7 374.9 C182.7 375.7 181.0 384.2 180.3 388.1 C179.6 392.0 177.4 395.7 175.3 398.4 C173.3 401.1 170.9 404.1 168.0 404.3 C165.0 404.4 160.6 401.5 157.7 399.3 C154.8 397.1 152.3 393.5 150.4 391.1 C148.4 388.6 146.7 385.7 146.0 384.6Z" fill="#222"/>
<path d="M134.3 290.7 Q137.9 301.8 148.4 304.6 Q139.6 311.4 139.8 321.9 Q130.5 316.4 119.1 320.6 Q123.9 309.7 118.3 300.2 Q128.6 300.4 134.3 290.7Z" fill="#fbe25c" stroke="#fbe25c" stroke-width=".6" stroke-linejoin="round"/>
<path d="M207.2 313.2 Q207.7 320.5 213.8 323.7 Q207.5 326.8 206.4 333.6 Q201.3 328.5 193.8 329.3 Q197.4 323.8 193.8 318.1 Q201.5 318.8 207.2 313.2Z" fill="#fbe25c" stroke="#fbe25c" stroke-width=".5" stroke-linejoin="round"/>
<circle cx="116.0" cy="283.6" r="1.5" fill="#fbe25c"/>
<circle cx="198.4" cy="306.4" r="1.4" fill="#fbe25c"/>
</svg>
<!--M-END-->
</div>
</body></html>
